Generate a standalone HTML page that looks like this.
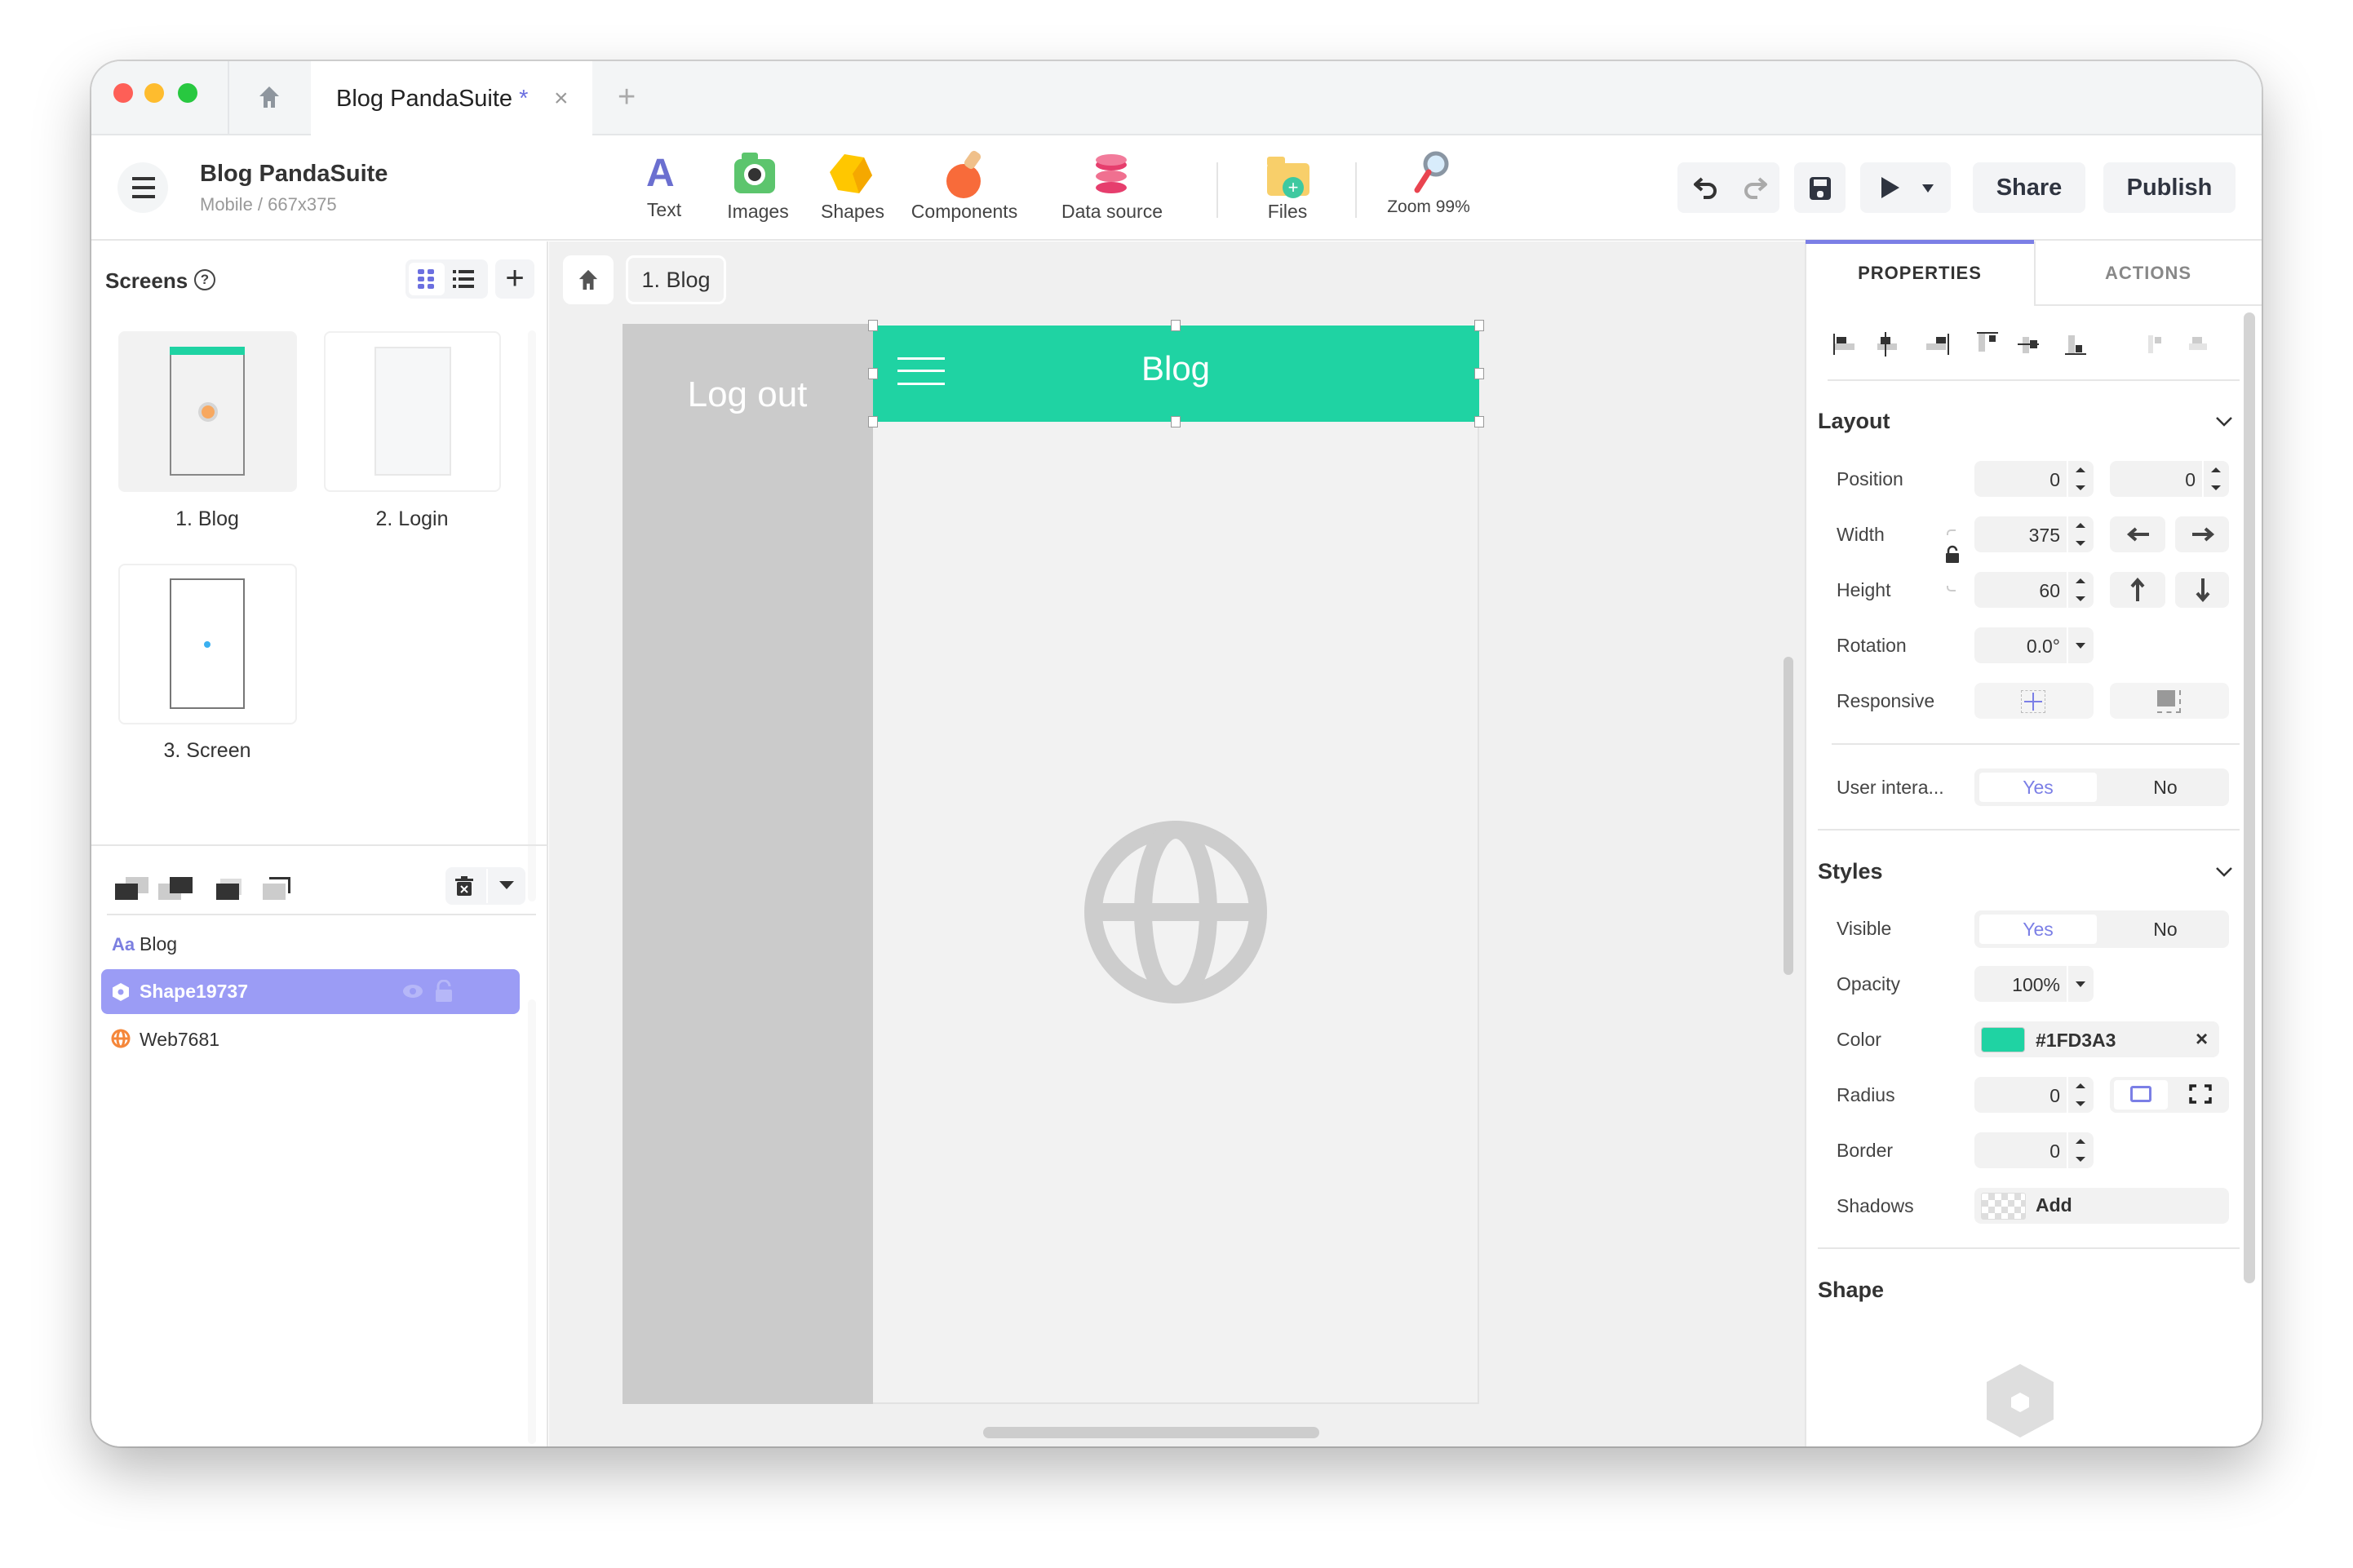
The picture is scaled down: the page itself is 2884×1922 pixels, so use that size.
<!DOCTYPE html>
<html><head><meta charset="utf-8">
<style>
*{box-sizing:border-box;margin:0;padding:0}
body{width:2884px;height:1922px;background:#fff;font-family:"Liberation Sans",sans-serif;position:relative;overflow:hidden;color:#333}
.a{position:absolute}
.win{left:112px;top:75px;width:2660px;height:1698px;border-radius:36px;background:#fff;box-shadow:0 30px 70px rgba(0,0,0,.28),0 0 0 2px #d8d8d8;overflow:hidden}
.t{white-space:nowrap}
.lbl{font-size:23px;color:#444}
.inp{background:#f2f2f2;border-radius:8px;height:44px}
.num{font-size:23px;color:#333;text-align:right}
.btn{background:#f3f4f6;border-radius:8px}
.sep{background:#e6e6e6;height:2px}
</style></head><body>
<div class="a win">
 <!-- tab bar -->
 <div class="a" style="left:0;top:0;width:2660px;height:91px;background:#f3f5f6;border-bottom:2px solid #e4e6e8"></div>
 <div class="a" style="left:27px;top:27px;width:24px;height:24px;border-radius:50%;background:#fe5f57"></div>
 <div class="a" style="left:65px;top:27px;width:24px;height:24px;border-radius:50%;background:#febc2e"></div>
 <div class="a" style="left:106px;top:27px;width:24px;height:24px;border-radius:50%;background:#28c840"></div>
 <div class="a" style="left:167px;top:0;width:2px;height:91px;background:#e4e6e8"></div>
 <svg class="a" style="left:204px;top:29px" width="28" height="30" viewBox="0 0 28 30"><path d="M14 2 L26 14 H21 V28 H16 V20 H12 V28 H7 V14 H2 Z" fill="#8e969e"/></svg>
 <div class="a" style="left:269px;top:0;width:345px;height:93px;background:#fff"></div>
 <div class="a t" style="left:300px;top:30px;font-size:29px;color:#222">Blog PandaSuite <span style="color:#6b6fe0">*</span></div>
 <div class="a t" style="left:567px;top:29px;font-size:30px;color:#999">×</div>
 <div class="a t" style="left:645px;top:23px;font-size:38px;color:#aaa;font-weight:300">+</div>

 <!-- toolbar -->
 <div class="a" style="left:0;top:93px;width:2660px;height:127px;background:#fff;border-bottom:2px solid #e6e6e6"></div>
 <div class="a" style="left:32px;top:124px;width:62px;height:62px;border-radius:50%;background:#f3f5f6"></div>
 <div class="a" style="left:50px;top:142px;width:28px;height:4px;background:#333;box-shadow:0 11px 0 #333,0 22px 0 #333"></div>
 <div class="a t" style="left:133px;top:122px;font-size:29px;color:#333;font-weight:bold">Blog PandaSuite</div>
 <div class="a t" style="left:133px;top:163px;font-size:22px;color:#999">Mobile / 667x375</div>

 <!-- tool icons -->
 <div class="a t" style="left:680px;top:110px;font-size:48px;font-weight:bold;color:#6b6fd0">A</div>
 <div class="a" style="left:788px;top:120px;width:50px;height:42px;border-radius:8px;background:#5cc56d"></div>
 <div class="a" style="left:797px;top:112px;width:20px;height:10px;border-radius:3px;background:#5cc56d"></div>
 <div class="a" style="left:800px;top:126px;width:26px;height:26px;border-radius:50%;background:#333;border:5px solid #fff"></div>
 <svg class="a" style="left:903px;top:112px" width="56" height="54" viewBox="0 0 56 54"><polygon points="20,2 44,6 54,28 38,50 12,46 2,24" fill="#ffc700"/><polygon points="44,6 54,28 38,50 30,26" fill="#f5a800"/></svg>
 <div class="a" style="left:1048px;top:126px;width:42px;height:42px;border-radius:50%;background:#f86b3a"></div>
 <div class="a" style="left:1073px;top:110px;width:14px;height:22px;border-radius:5px;background:#f0c08a;transform:rotate(35deg)"></div>
 <div class="a" style="left:1231px;top:120px;width:38px;height:14px;border-radius:50%;background:#e63e6d;box-shadow:0 14px 0 #f07090,0 28px 0 #e63e6d"></div>
 <div class="a" style="left:1231px;top:114px;width:38px;height:14px;border-radius:50%;background:#f27b9b"></div>
 <div class="a" style="left:1441px;top:125px;width:52px;height:40px;border-radius:5px;background:#f8cf6a"></div>
 <div class="a" style="left:1441px;top:117px;width:22px;height:12px;border-radius:3px;background:#f8cf6a"></div>
 <div class="a" style="left:1460px;top:142px;width:26px;height:26px;border-radius:50%;background:#3ec9a0;color:#fff;font-size:22px;line-height:26px;text-align:center">+</div>
 <svg class="a" style="left:1617px;top:108px" width="50" height="56" viewBox="0 0 50 56"><circle cx="31" cy="18" r="13" fill="#d8ecfb" stroke="#8a96a3" stroke-width="5"/><line x1="22" y1="28" x2="8" y2="50" stroke="#e94450" stroke-width="7" stroke-linecap="round"/></svg>
 <div class="a" style="left:1379px;top:124px;width:2px;height:68px;background:#e4e4e4"></div>
 <div class="a" style="left:1549px;top:124px;width:2px;height:68px;background:#e4e4e4"></div>
 <div class="a t lbl" style="left:702px;top:169px;transform:translateX(-50%)">Text</div>
 <div class="a t lbl" style="left:817px;top:171px;transform:translateX(-50%)">Images</div>
 <div class="a t lbl" style="left:933px;top:171px;transform:translateX(-50%)">Shapes</div>
 <div class="a t lbl" style="left:1070px;top:171px;transform:translateX(-50%)">Components</div>
 <div class="a t lbl" style="left:1251px;top:171px;transform:translateX(-50%)">Data source</div>
 <div class="a t lbl" style="left:1466px;top:171px;transform:translateX(-50%)">Files</div>
 <div class="a t lbl" style="left:1639px;top:167px;transform:translateX(-50%);font-size:21px">Zoom 99%</div>

 <!-- right buttons -->
 <div class="a btn" style="left:1944px;top:124px;width:125px;height:62px"></div>
 <svg class="a" style="left:1962px;top:138px" width="34" height="34" viewBox="0 0 34 34"><path d="M12 6 L4 13 L12 20 M5 13 H20 a8 8 0 0 1 0 16 H14" fill="none" stroke="#333" stroke-width="4" stroke-linejoin="round"/></svg>
 <svg class="a" style="left:2022px;top:138px" width="34" height="34" viewBox="0 0 34 34"><path d="M22 6 L30 13 L22 20 M29 13 H14 a8 8 0 0 0 0 16 H20" fill="none" stroke="#aaa" stroke-width="4" stroke-linejoin="round"/></svg>
 <div class="a btn" style="left:2087px;top:124px;width:63px;height:62px"></div>
 <svg class="a" style="left:2105px;top:141px" width="28" height="30" viewBox="0 0 28 30"><rect x="1" y="1" width="26" height="28" rx="4" fill="#2f3440"/><rect x="6" y="4" width="16" height="8" fill="#f3f4f6"/><rect x="10" y="18" width="8" height="8" rx="3" fill="#f3f4f6"/></svg>
 <div class="a btn" style="left:2168px;top:124px;width:111px;height:62px"></div>
 <svg class="a" style="left:2192px;top:140px" width="26" height="30"><path d="M2 2 L24 15 L2 28 Z" fill="#2f3440"/></svg>
 <svg class="a" style="left:2243px;top:150px" width="16" height="12"><path d="M1 1 L15 1 L8 11 Z" fill="#2f3440"/></svg>
 <div class="a btn t" style="left:2306px;top:124px;width:138px;height:62px;font-size:29px;line-height:62px;text-align:center;color:#2f3440;font-weight:bold">Share</div>
 <div class="a btn t" style="left:2466px;top:124px;width:162px;height:62px;font-size:29px;line-height:62px;text-align:center;color:#2f3440;font-weight:bold">Publish</div>

 <!-- left panel -->
 <div class="a" style="left:0;top:221px;width:560px;height:1480px;background:#fff;border-right:2px solid #e6e6e6"></div>
 <div class="a t" style="left:17px;top:254px;font-size:26px;font-weight:bold;color:#333">Screens</div>
 <div class="a" style="left:126px;top:255px;width:26px;height:26px;border:2.5px solid #444;border-radius:50%;font-size:17px;line-height:21px;text-align:center;font-weight:bold;color:#444">?</div>
 <div class="a btn" style="left:385px;top:243px;width:101px;height:48px"></div>
 <div class="a" style="left:389px;top:247px;width:44px;height:40px;background:#fff;border-radius:6px"></div>
 <svg class="a" style="left:400px;top:255px" width="20" height="24"><g fill="#6b6fe0"><rect x="0" y="0" width="8" height="6" rx="2"/><rect x="12" y="0" width="8" height="6" rx="2"/><rect x="0" y="9" width="8" height="6" rx="2"/><rect x="12" y="9" width="8" height="6" rx="2"/><rect x="0" y="18" width="8" height="6" rx="2"/><rect x="12" y="18" width="8" height="6" rx="2"/></g></svg>
 <svg class="a" style="left:443px;top:256px" width="26" height="22"><g fill="#333"><rect x="0" y="0" width="4" height="4"/><rect x="7" y="0" width="19" height="4"/><rect x="0" y="9" width="4" height="4"/><rect x="7" y="9" width="19" height="4"/><rect x="0" y="18" width="4" height="4"/><rect x="7" y="18" width="19" height="4"/></g></svg>
 <div class="a btn" style="left:495px;top:243px;width:48px;height:48px;font-size:40px;line-height:46px;text-align:center;color:#333">+</div>

 <div class="a" style="left:33px;top:331px;width:219px;height:197px;background:#f2f2f2;border-radius:8px"></div>
 <div class="a" style="left:96px;top:350px;width:92px;height:158px;background:#f2f2f2;border:2px solid #888"></div>
 <div class="a" style="left:96px;top:350px;width:92px;height:10px;background:#1fd3a3"></div>
 <div class="a" style="left:131px;top:418px;width:24px;height:24px;border-radius:50%;border:4px solid #d6d6d6;background:#f7a860"></div>
 <div class="a t" style="left:142px;top:547px;transform:translateX(-50%);font-size:25px;color:#333">1. Blog</div>

 <div class="a" style="left:285px;top:331px;width:217px;height:197px;background:#fff;border:2px solid #f0f0f0;border-radius:8px"></div>
 <div class="a" style="left:347px;top:350px;width:94px;height:158px;background:#f6f7f8;border:2px solid #e8e8e8"></div>
 <div class="a t" style="left:393px;top:547px;transform:translateX(-50%);font-size:25px;color:#333">2. Login</div>

 <div class="a" style="left:33px;top:616px;width:219px;height:197px;background:#fff;border:2px solid #f0f0f0;border-radius:8px"></div>
 <div class="a" style="left:96px;top:634px;width:92px;height:160px;background:#fff;border:2px solid #777"></div>
 <div class="a" style="left:138px;top:711px;width:8px;height:8px;border-radius:50%;background:#3ab0f0"></div>
 <div class="a t" style="left:142px;top:831px;transform:translateX(-50%);font-size:25px;color:#333">3. Screen</div>
 <div class="a" style="left:535px;top:330px;width:10px;height:700px;background:#f8f8f8;border-radius:5px"></div>

 <div class="a sep" style="left:0;top:960px;width:560px"></div>
 <div class="a" style="left:42px;top:1000px;width:28px;height:20px;background:#ccc"></div>
 <div class="a" style="left:29px;top:1008px;width:28px;height:20px;background:#333"></div>
 <div class="a" style="left:82px;top:1008px;width:28px;height:20px;background:#ccc"></div>
 <div class="a" style="left:96px;top:1000px;width:28px;height:20px;background:#333"></div>
 <div class="a" style="left:158px;top:1002px;width:26px;height:20px;background:#ddd"></div>
 <div class="a" style="left:153px;top:1008px;width:28px;height:20px;background:#333"></div>
 <div class="a" style="left:210px;top:1008px;width:28px;height:20px;background:#ccc"></div>
 <div class="a" style="left:218px;top:1000px;width:26px;height:20px;border:3px solid #333;border-left:none;border-bottom:none"></div>
 <div class="a btn" style="left:434px;top:988px;width:98px;height:46px"></div>
 <svg class="a" style="left:446px;top:999px" width="22" height="24"><rect x="0" y="3" width="22" height="3" fill="#333"/><rect x="7" y="0" width="8" height="4" fill="#333"/><rect x="2" y="7" width="18" height="17" rx="2" fill="#333"/><path d="M7 12 L15 20 M15 12 L7 20" stroke="#fff" stroke-width="2"/></svg>
 <div class="a" style="left:484px;top:990px;width:2px;height:42px;background:#fff"></div>
 <svg class="a" style="left:500px;top:1005px" width="18" height="10"><path d="M0 0 L18 0 L9 10Z" fill="#333"/></svg>
 <div class="a sep" style="left:19px;top:1045px;width:526px"></div>
 <div class="a t" style="left:25px;top:1070px;font-size:22px;color:#7b7fe0;font-weight:bold">Aa</div>
 <div class="a t" style="left:59px;top:1069px;font-size:23px;color:#333">Blog</div>
 <div class="a" style="left:12px;top:1113px;width:513px;height:55px;background:#9b9cf5;border-radius:8px"></div>
 <svg class="a" style="left:24px;top:1129px" width="24" height="24"><polygon points="12,1 22,6.5 22,17.5 12,23 2,17.5 2,6.5" fill="#fff"/><circle cx="12" cy="12" r="3.5" fill="#9b9cf5"/></svg>
 <div class="a t" style="left:59px;top:1127px;font-size:23px;color:#fff;font-weight:bold">Shape19737</div>
 <svg class="a" style="left:381px;top:1131px" width="26" height="18"><ellipse cx="13" cy="9" rx="12" ry="8" fill="#b6b7f8"/><circle cx="13" cy="9" r="4" fill="#9b9cf5"/></svg>
 <svg class="a" style="left:420px;top:1126px" width="24" height="28"><path d="M5 12 V8 a7 7 0 0 1 14 0" fill="none" stroke="#b6b7f8" stroke-width="3"/><rect x="2" y="12" width="20" height="15" rx="2" fill="#b6b7f8"/></svg>
 <svg class="a" style="left:24px;top:1186px" width="24" height="24"><g fill="none" stroke="#f5873a" stroke-width="3"><circle cx="12" cy="12" r="10"/><ellipse cx="12" cy="12" rx="4" ry="10"/><line x1="2" y1="12" x2="22" y2="12"/></g></svg>
 <div class="a t" style="left:59px;top:1186px;font-size:23px;color:#333">Web7681</div>
 <div class="a" style="left:535px;top:1150px;width:10px;height:545px;background:#f8f8f8;border-radius:5px"></div>

 <!-- canvas area -->
 <div class="a" style="left:561px;top:221px;width:1539px;height:1480px;background:#f0f0f0"></div>
 <div class="a" style="left:578px;top:238px;width:62px;height:60px;background:#fff;border-radius:10px"></div>
 <svg class="a" style="left:596px;top:254px" width="26" height="28" viewBox="0 0 28 30"><path d="M14 2 L26 14 H21 V28 H16 V20 H12 V28 H7 V14 H2 Z" fill="#555"/></svg>
 <div class="a" style="left:655px;top:238px;width:123px;height:60px;background:#f2f2f2;border:3px solid #fff;border-radius:10px;font-size:27px;line-height:54px;text-align:center;color:#333">1. Blog</div>
 <div class="a" style="left:651px;top:322px;width:1050px;height:1324px;background:#f2f2f2;border-right:2px solid #e2e2e2;border-bottom:2px solid #e2e2e2"></div>
 <div class="a" style="left:651px;top:322px;width:307px;height:1324px;background:#cbcbcb"></div>
 <div class="a t" style="left:804px;top:384px;transform:translateX(-50%);font-size:44px;color:#fff">Log out</div>
 <div class="a" style="left:958px;top:324px;width:743px;height:118px;background:#1fd3a3"></div>
 <div class="a" style="left:988px;top:363px;width:58px;height:3px;background:#fff;box-shadow:0 15px 0 #fff,0 31px 0 #fff"></div>
 <div class="a t" style="left:1329px;top:353px;transform:translateX(-50%);font-size:42px;color:#fff">Blog</div>
 <div class="a" style="left:952px;top:317px;width:12px;height:14px;background:#fff;border:1.5px solid #999"></div>
 <div class="a" style="left:1323px;top:317px;width:12px;height:14px;background:#fff;border:1.5px solid #999"></div>
 <div class="a" style="left:1695px;top:317px;width:12px;height:14px;background:#fff;border:1.5px solid #999"></div>
 <div class="a" style="left:952px;top:376px;width:12px;height:14px;background:#fff;border:1.5px solid #999"></div>
 <div class="a" style="left:1695px;top:376px;width:12px;height:14px;background:#fff;border:1.5px solid #999"></div>
 <div class="a" style="left:952px;top:435px;width:12px;height:14px;background:#fff;border:1.5px solid #999"></div>
 <div class="a" style="left:1323px;top:435px;width:12px;height:14px;background:#fff;border:1.5px solid #999"></div>
 <div class="a" style="left:1695px;top:435px;width:12px;height:14px;background:#fff;border:1.5px solid #999"></div>
 <svg class="a" style="left:1216px;top:930px" width="226" height="226" viewBox="0 0 226 226"><g fill="none" stroke="#cdcdcd" stroke-width="22"><circle cx="113" cy="113" r="101"/><ellipse cx="113" cy="113" rx="40" ry="101"/><line x1="12" y1="113" x2="214" y2="113"/></g></svg>
 <div class="a" style="left:1093px;top:1674px;width:412px;height:14px;background:#cdcdcd;border-radius:7px"></div>
 <div class="a" style="left:2074px;top:730px;width:12px;height:390px;background:#cdcdcd;border-radius:6px"></div>

 <!-- right panel -->
 <div class="a" style="left:2100px;top:221px;width:560px;height:1480px;background:#fff;border-left:2px solid #e6e6e6"></div>
 <div class="a" style="left:2101px;top:219px;width:280px;height:5px;background:#7b7fe6"></div>
 <div class="a" style="left:2381px;top:221px;width:279px;height:79px;border-left:2px solid #e6e6e6;border-bottom:2px solid #e6e6e6"></div>
 <div class="a t" style="left:2241px;top:247px;transform:translateX(-50%);font-size:22px;color:#333;font-weight:bold;letter-spacing:1px">PROPERTIES</div>
 <div class="a t" style="left:2521px;top:247px;transform:translateX(-50%);font-size:22px;color:#888;font-weight:bold;letter-spacing:1px">ACTIONS</div>
 <div class="a" style="left:2638px;top:308px;width:14px;height:1190px;background:#d4d4d4;border-radius:7px"></div>

 <svg class="a" style="left:2133px;top:332px" width="460" height="30" viewBox="0 0 460 30">
  <g fill="#ccc"><rect x="4" y="14" width="24" height="8"/><rect x="56" y="14" width="24" height="8"/><rect x="116" y="14" width="24" height="8"/><rect x="180" y="2" width="8" height="22"/><rect x="234" y="6" width="8" height="20"/><rect x="290" y="4" width="8" height="22"/><rect x="388" y="4" width="6" height="22" fill="#e4e4e4"/><rect x="438" y="14" width="24" height="8" fill="#e4e4e4"/></g>
  <g fill="#333"><rect x="2" y="2" width="2" height="26"/><rect x="6" y="6" width="12" height="8"/><rect x="65" y="0" width="2" height="30"/><rect x="60" y="6" width="12" height="9"/><rect x="142" y="2" width="2" height="26"/><rect x="128" y="6" width="12" height="8"/><rect x="178" y="0" width="26" height="2"/><rect x="193" y="4" width="8" height="8"/><rect x="228" y="14" width="26" height="2"/><rect x="243" y="10" width="9" height="10"/><rect x="286" y="26" width="26" height="2"/><rect x="299" y="16" width="8" height="9"/></g>
  <g fill="#ccc"><rect x="396" y="6" width="8" height="8"/><rect x="442" y="6" width="12" height="8"/></g>
 </svg>
 <div class="a sep" style="left:2128px;top:390px;width:505px"></div>
 <div class="a t" style="left:2116px;top:426px;font-size:27px;font-weight:bold;color:#333">Layout</div>
 <svg class="a" style="left:2604px;top:436px" width="20" height="12"><path d="M1 1 L10 10 L19 1" fill="none" stroke="#333" stroke-width="2.5"/></svg>

 <div class="a t lbl" style="left:2139px;top:499px">Position</div>
 <div class="a t lbl" style="left:2139px;top:567px">Width</div>
 <div class="a t lbl" style="left:2139px;top:635px">Height</div>
 <div class="a t lbl" style="left:2139px;top:703px">Rotation</div>
 <div class="a t lbl" style="left:2139px;top:771px">Responsive</div>

 <div class="a inp" style="left:2308px;top:490px;width:146px"></div>
 <div class="a inp" style="left:2308px;top:558px;width:146px"></div>
 <div class="a inp" style="left:2308px;top:626px;width:146px"></div>
 <div class="a inp" style="left:2308px;top:694px;width:146px"></div>
 <div class="a" style="left:2421px;top:490px;width:2px;height:248px;background:#fff"></div>
 <div class="a t num" style="left:2308px;top:500px;width:105px">0</div>
 <div class="a t num" style="left:2308px;top:568px;width:105px">375</div>
 <div class="a t num" style="left:2308px;top:636px;width:105px">60</div>
 <div class="a t num" style="left:2308px;top:704px;width:105px">0.0°</div>
 <svg class="a" style="left:2430px;top:497px" width="16" height="170"><g fill="#333"><path d="M2 7 L14 7 L8 1Z"/><path d="M2 23 L14 23 L8 29Z"/><path d="M2 75 L14 75 L8 69Z"/><path d="M2 91 L14 91 L8 97Z"/><path d="M2 143 L14 143 L8 137Z"/><path d="M2 159 L14 159 L8 165Z"/></g></svg>
 <svg class="a" style="left:2430px;top:711px" width="16" height="10"><path d="M2 2 L14 2 L8 9Z" fill="#333"/></svg>
 <div class="a inp" style="left:2474px;top:490px;width:146px"></div>
 <div class="a t num" style="left:2474px;top:500px;width:105px">0</div>
 <div class="a" style="left:2587px;top:490px;width:2px;height:44px;background:#fff"></div>
 <svg class="a" style="left:2596px;top:497px" width="16" height="30"><g fill="#333"><path d="M2 7 L14 7 L8 1Z"/><path d="M2 23 L14 23 L8 29Z"/></g></svg>
 <div class="a inp" style="left:2474px;top:558px;width:68px"></div>
 <div class="a inp" style="left:2554px;top:558px;width:66px"></div>
 <div class="a inp" style="left:2474px;top:626px;width:68px"></div>
 <div class="a inp" style="left:2554px;top:626px;width:66px"></div>
 <svg class="a" style="left:2494px;top:570px" width="30" height="20"><path d="M28 10 H6 M12 3 L4 10 L12 17" fill="none" stroke="#444" stroke-width="4"/></svg>
 <svg class="a" style="left:2573px;top:570px" width="30" height="20"><path d="M2 10 H24 M18 3 L26 10 L18 17" fill="none" stroke="#444" stroke-width="4"/></svg>
 <svg class="a" style="left:2498px;top:632px" width="20" height="32"><path d="M10 30 V6 M3 12 L10 4 L17 12" fill="none" stroke="#444" stroke-width="4"/></svg>
 <svg class="a" style="left:2578px;top:632px" width="20" height="32"><path d="M10 2 V26 M3 20 L10 28 L17 20" fill="none" stroke="#444" stroke-width="4"/></svg>
 <svg class="a" style="left:2271px;top:573px" width="22" height="80"><path d="M14 2 H8 a4 4 0 0 0 -4 4 V8 M14 76 H8 a4 4 0 0 1 -4 -4 V70" fill="none" stroke="#ccc" stroke-width="2"/><path d="M5 30 V27 a5 5 0 0 1 10 0" fill="none" stroke="#333" stroke-width="2.5"/><rect x="2" y="30" width="16" height="12" rx="1" fill="#333"/></svg>
 <div class="a inp" style="left:2308px;top:762px;width:146px;background:#f4f4f4"></div>
 <div class="a" style="left:2365px;top:771px;width:30px;height:28px;border:1.5px dashed #bbb"></div>
 <svg class="a" style="left:2365px;top:771px" width="30" height="28"><path d="M4 14 H26 M15 3 V25" stroke="#7b7fe6" stroke-width="2"/></svg>
 <div class="a inp" style="left:2474px;top:762px;width:146px;background:#f4f4f4"></div>
 <div class="a" style="left:2532px;top:771px;width:22px;height:20px;background:#999"></div>
 <div class="a" style="left:2532px;top:771px;width:29px;height:28px;border:2px dashed #999;border-left:none;border-top:none"></div>
 <div class="a sep" style="left:2133px;top:836px;width:500px"></div>
 <div class="a t lbl" style="left:2139px;top:877px">User intera...</div>
 <div class="a inp" style="left:2308px;top:867px;width:312px;height:46px"></div>
 <div class="a" style="left:2314px;top:872px;width:144px;height:36px;background:#fff;border-radius:4px"></div>
 <div class="a t" style="left:2386px;top:877px;transform:translateX(-50%);font-size:23px;color:#7b7fe6">Yes</div>
 <div class="a t" style="left:2542px;top:877px;transform:translateX(-50%);font-size:23px;color:#333">No</div>
 <div class="a sep" style="left:2116px;top:941px;width:517px"></div>

 <div class="a t" style="left:2116px;top:978px;font-size:27px;font-weight:bold;color:#333">Styles</div>
 <svg class="a" style="left:2604px;top:988px" width="20" height="12"><path d="M1 1 L10 10 L19 1" fill="none" stroke="#333" stroke-width="2.5"/></svg>
 <div class="a t lbl" style="left:2139px;top:1050px">Visible</div>
 <div class="a t lbl" style="left:2139px;top:1118px">Opacity</div>
 <div class="a t lbl" style="left:2139px;top:1186px">Color</div>
 <div class="a t lbl" style="left:2139px;top:1254px">Radius</div>
 <div class="a t lbl" style="left:2139px;top:1322px">Border</div>
 <div class="a t lbl" style="left:2139px;top:1390px">Shadows</div>

 <div class="a inp" style="left:2308px;top:1041px;width:312px;height:46px"></div>
 <div class="a" style="left:2314px;top:1046px;width:144px;height:36px;background:#fff;border-radius:4px"></div>
 <div class="a t" style="left:2386px;top:1051px;transform:translateX(-50%);font-size:23px;color:#7b7fe6">Yes</div>
 <div class="a t" style="left:2542px;top:1051px;transform:translateX(-50%);font-size:23px;color:#333">No</div>

 <div class="a inp" style="left:2308px;top:1109px;width:146px"></div>
 <div class="a" style="left:2421px;top:1109px;width:2px;height:44px;background:#fff"></div>
 <div class="a t num" style="left:2308px;top:1119px;width:105px">100%</div>
 <svg class="a" style="left:2430px;top:1126px" width="16" height="10"><path d="M2 2 L14 2 L8 9Z" fill="#333"/></svg>

 <div class="a inp" style="left:2308px;top:1177px;width:300px"></div>
 <div class="a" style="left:2316px;top:1184px;width:54px;height:31px;background:#1fd3a3;border-radius:4px;border:1px solid #ccc"></div>
 <div class="a t" style="left:2383px;top:1187px;font-size:23px;color:#333;font-weight:bold">#1FD3A3</div>
 <div class="a t" style="left:2579px;top:1183px;font-size:26px;color:#333;font-weight:bold">×</div>

 <div class="a inp" style="left:2308px;top:1245px;width:146px"></div>
 <div class="a t num" style="left:2308px;top:1255px;width:105px">0</div>
 <div class="a inp" style="left:2308px;top:1313px;width:146px"></div>
 <div class="a t num" style="left:2308px;top:1323px;width:105px">0</div>
 <div class="a" style="left:2421px;top:1245px;width:2px;height:112px;background:#fff"></div>
 <svg class="a" style="left:2430px;top:1252px" width="16" height="100"><g fill="#333"><path d="M2 7 L14 7 L8 1Z"/><path d="M2 23 L14 23 L8 29Z"/><path d="M2 75 L14 75 L8 69Z"/><path d="M2 91 L14 91 L8 97Z"/></g></svg>
 <div class="a inp" style="left:2474px;top:1245px;width:146px"></div>
 <div class="a" style="left:2479px;top:1249px;width:66px;height:36px;background:#fff;border-radius:4px"></div>
 <div class="a" style="left:2499px;top:1256px;width:26px;height:20px;border:3px solid #7b7fe6;border-radius:3px"></div>
 <svg class="a" style="left:2571px;top:1254px" width="28" height="24"><path d="M2 8 V2 H9 M19 2 H26 V8 M26 16 V22 H19 M9 22 H2 V16" fill="none" stroke="#222" stroke-width="3.5"/></svg>

 <div class="a inp" style="left:2308px;top:1381px;width:312px"></div>
 <div class="a" style="left:2316px;top:1387px;width:55px;height:33px;border:1px solid #ddd;border-radius:3px;background:repeating-conic-gradient(#ddd 0 25%,#fff 0 50%) 0 0/16px 16px"></div>
 <div class="a t" style="left:2383px;top:1389px;font-size:23px;color:#333;font-weight:bold">Add</div>
 <div class="a sep" style="left:2116px;top:1454px;width:517px"></div>
 <div class="a t" style="left:2116px;top:1491px;font-size:27px;font-weight:bold;color:#333">Shape</div>
 <svg class="a" style="left:2317px;top:1595px" width="94" height="94" viewBox="0 0 94 94"><polygon points="47,2 88,24 88,70 47,92 6,70 6,24" fill="#dedede"/><polygon points="47,37 58,43 58,55 47,61 36,55 36,43" fill="#fff"/></svg>
</div>
</body></html>
